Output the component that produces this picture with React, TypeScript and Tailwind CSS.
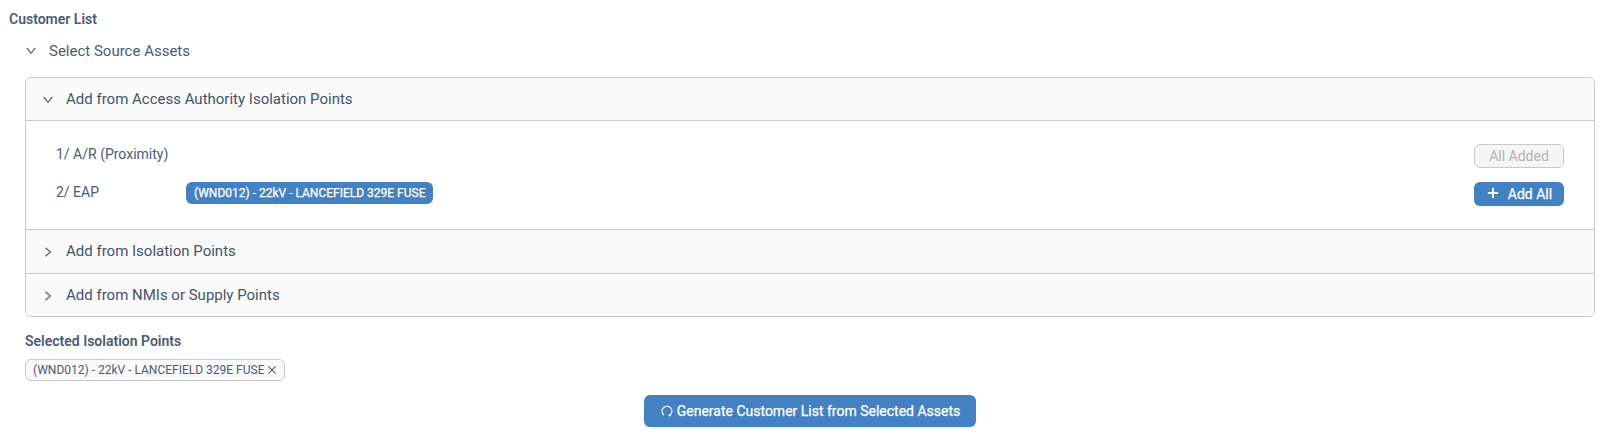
import { AiOutlineClose, AiOutlineDown, AiOutlinePlus, AiOutlineRedo, AiOutlineRight } from "react-icons/ai";

function PanelHeader({ title, open, className }: { title: string; open?: boolean; className: string }) {
  const Icon = open ? AiOutlineDown : AiOutlineRight;
  return (
    <div className={`flex items-center bg-[#fafafa] pl-4 text-[15px] text-[#44546a] ${className}`}>
      <Icon className="mr-3 size-3 stroke-[#44546a] [stroke-width:20]" />
      <span>{title}</span>
    </div>
  );
}

export default function App() {
  return (
    <div className="h-[445px] bg-white font-['Roboto',sans-serif] text-sm text-[#4a5b73]">
      <h1 className="pt-2 pl-[9px] text-sm leading-[22px] font-semibold">Customer List</h1>
      <div className="flex h-[42px] items-center pb-px pl-[25px] text-[15px] leading-6">
        <AiOutlineDown className="mr-3 size-3 stroke-[#44546a] [stroke-width:20]" />
        <span>Select Source Assets</span>
      </div>

      <div className="mt-[5px] mr-[11px] ml-[25px] overflow-hidden rounded-md border border-[#c9c9c9]">
        <PanelHeader title="Add from Access Authority Isolation Points" open className="h-[42px] pt-px" />
        <div className="h-[110px] border-y border-[#c9c9c9] px-[30px] pt-[22px]">
          <div className="flex h-[38px] items-start">
            <span className="grow leading-[22px]">1/ A/R (Proximity)</span>
            <button className="mt-px h-6 w-[90px] rounded-md border border-[#c9c9c9] bg-[#f5f5f5] text-[#b3b3b3]">
              All Added
            </button>
          </div>
          <div className="flex items-start">
            <span className="w-[130px] leading-[22px]">2/ EAP</span>
            <span className="mt-px h-[22px] rounded-md bg-[#4481c2] px-2 text-xs leading-[22px] text-white [-webkit-text-stroke:0.25px_white]">
              (WND012) - 22kV - LANCEFIELD 329E FUSE
            </span>
            <button className="mt-px ml-auto flex h-6 w-[90px] items-center justify-center gap-2 rounded-md bg-[#4481c2] text-white shadow-[0_2px_0_rgba(0,0,0,0.02)] [-webkit-text-stroke:0.25px_white]">
              <AiOutlinePlus className="mb-0.5 size-[14px] stroke-white [stroke-width:60]" />
              Add All
            </button>
          </div>
        </div>
        <PanelHeader title="Add from Isolation Points" className="h-[43px]" />
        <PanelHeader title="Add from NMIs or Supply Points" className="h-[43px] border-t border-[#c9c9c9] pt-px" />
      </div>

      <h2 className="mt-[13px] pl-[25px] text-sm leading-[22px] font-semibold">Selected Isolation Points</h2>
      <div className="mt-[7px] flex pl-[25px]">
        <span className="flex h-[22px] w-[260px] items-center rounded-md border border-[#c9c9c9] bg-[#fafafa] pl-[7px] text-xs whitespace-nowrap">
          (WND012) - 22kV - LANCEFIELD 329E FUSE
          <AiOutlineClose className="ml-[2px] size-3 shrink-0" />
        </span>
      </div>
      <div className="mt-[14px] flex justify-center pl-[14px]">
        <button className="flex h-8 w-[332px] items-center justify-center rounded-md bg-[#4481c2] text-white shadow-[0_2px_0_rgba(0,0,0,0.04)] [-webkit-text-stroke:0.25px_white]">
          <AiOutlineRedo className="mr-[3px] size-[14px]" />
          Generate Customer List from Selected Assets
        </button>
      </div>
    </div>
  );
}
